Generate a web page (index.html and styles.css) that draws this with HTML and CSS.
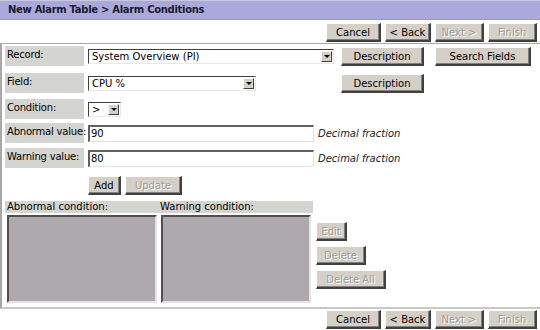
FILE: index.html
```html
<!DOCTYPE html>
<html>
<head>
<meta charset="utf-8">
<link rel="stylesheet" href="styles.css">
</head>
<body>
<div class="title">New Alarm Table &gt; Alarm Conditions</div>
<div class="nav">
  <span class="btn w55">Cancel</span>
  <span class="btn w46">&lt; Back</span>
  <span class="btn w49 dis">Next &gt;</span>
  <span class="btn w49 dis">Finish</span>
</div>
<div class="panel">
  <div class="row r1">
    <div class="lbl">Record:</div>
    <div class="sel w246"><span class="val">System Overview (PI)</span><span class="arr"></span></div>
    <span class="btn desc">Description</span>
    <span class="btn search">Search Fields</span>
  </div>
  <div class="row r2">
    <div class="lbl">Field:</div>
    <div class="sel w168"><span class="val">CPU %</span><span class="arr"></span></div>
    <span class="btn desc desc2">Description</span>
  </div>
  <div class="row r3">
    <div class="lbl">Condition:</div>
    <div class="sel w33"><span class="val">&gt;</span><span class="arr"></span></div>
  </div>
  <div class="row r4">
    <div class="lbl">Abnormal value:</div>
    <div class="inp">90</div>
    <span class="hint">Decimal fraction</span>
  </div>
  <div class="row r5">
    <div class="lbl">Warning value:</div>
    <div class="inp">80</div>
    <span class="hint">Decimal fraction</span>
  </div>
  <div class="row r6">
    <span class="btn add">Add</span>
    <span class="btn dis upd">Update</span>
  </div>
  <div class="lists">
    <div class="listcol">
      <div class="lhead">
        <span class="lh1">Abnormal condition:</span>
        <span class="lh2">Warning condition:</span>
      </div>
      <div class="boxes">
        <div class="box"></div>
        <div class="box"></div>
      </div>
    </div>
    <div class="side">
      <span class="btn dis edit">Edit</span>
      <span class="btn dis del">Delete</span>
      <span class="btn dis delall">Delete All</span>
    </div>
  </div>
</div>
<div class="nav bottom">
  <span class="btn w55">Cancel</span>
  <span class="btn w46">&lt; Back</span>
  <span class="btn w49 dis">Next &gt;</span>
  <span class="btn w49 dis">Finish</span>
</div>
</body>
</html>
```
FILE: styles.css
```css
html, body {
  margin: 0;
  padding: 0;
  background: #ffffff;
  overflow: hidden;
}
body {
  width: 540px;
  height: 330px;
  font-family: "DejaVu Sans", Verdana, sans-serif;
  font-size: 10px;
  color: #000;
}
.title {
  background: #aba8dc;
  border-top: 1px solid #c8c8d8;
  border-bottom: 1px solid #9c9cb0;
  font-weight: bold;
  font-size: 10px;
  letter-spacing: -0.3px;
  line-height: 17px;
  padding-left: 8px;
  color: #1a1a2a;
  box-sizing: border-box;
  height: 20px;
}
.nav {
  display: flex;
  justify-content: flex-end;
  gap: 4px;
  padding: 3px 3px 0 0;
  height: 23px;
  box-sizing: border-box;
}
.nav.bottom {
  padding-top: 1px;
  height: auto;
}
.btn {
  display: inline-flex;
  align-items: center;
  justify-content: center;
  box-sizing: border-box;
  height: 19px;
  background: #d4d0c8;
  border-top: 1px solid #ffffff;
  border-left: 1px solid #ffffff;
  border-right: 2px solid #404040;
  border-bottom: 2px solid #404040;
  box-shadow: inset -1px -1px 0 #808080;
  font-size: 10px;
  color: #000;
  padding-top: 1px;
  white-space: nowrap;
}
.btn.dis {
  color: #a09c94;
  text-shadow: 1px 1px 0 #ffffff;
}
.w55 { width: 55px; }
.w46 { width: 46px; }
.w49 { width: 49px; }

.panel {
  border-top: 1px solid #a8a8a8;
  border-left: 2px solid #a8a8a8;
  border-bottom: 2px solid #c8c8c8;
  height: 266px;
  box-sizing: border-box;
  padding: 2px 0 0 3px;
  width: 545px;
}
.row {
  display: flex;
  align-items: center;
  gap: 4px;
}
.lbl {
  width: 79px;
  height: 20px;
  background: #d4d4d0;
  padding: 2px 0 0 2px;
  box-sizing: border-box;
  align-self: flex-start;
  white-space: nowrap;
  line-height: 13px;
  letter-spacing: -0.2px;
}
.r1 { height: 21px; }
.r2 { margin-top: 6px; height: 21px; }
.r3 { margin-top: 5px; height: 21px; }
.r4 { margin-top: 3px; height: 20px; }
.r5 { margin-top: 5px; height: 21px; }
.r6 { margin-top: 7px; padding-left: 83px; height: 19px; }

.sel {
  display: flex;
  align-items: center;
  justify-content: space-between;
  box-sizing: border-box;
  height: 15px;
  background: #fff;
  border-top: 1px solid #404040;
  border-left: 1px solid #404040;
  border-right: 1px solid #e8e8e8;
  border-bottom: 1px solid #e8e8e8;
  padding-left: 3px;
}
.val { line-height: 13px; }
.arr {
  width: 11px;
  height: 11px;
  margin-right: 1px;
  box-sizing: border-box;
  background: #d4d0c8;
  border-top: 1px solid #fff;
  border-left: 1px solid #fff;
  border-right: 1px solid #404040;
  border-bottom: 1px solid #404040;
  position: relative;
}
.arr::after {
  content: "";
  position: absolute;
  left: 2px;
  top: 3px;
  border-left: 3px solid transparent;
  border-right: 3px solid transparent;
  border-top: 3px solid #000;
}
.w246 { width: 246px; }
.w168 { width: 168px; }
.w33 { width: 33px; }

.desc { width: 83px; margin-left: 3px; }
.desc2 { margin-left: 81px; }
.search { width: 96px; margin-left: 7px; }

.inp {
  width: 226px;
  height: 17px;
  box-sizing: border-box;
  background: #fff;
  border-top: 2px solid #606060;
  border-left: 2px solid #606060;
  border-right: 1px solid #e0e0e0;
  border-bottom: 1px solid #e0e0e0;
  padding-left: 1px;
  line-height: 14px;
}
.hint {
  font-style: italic;
  color: #222;
}
.add { width: 33px; }
.upd { width: 57px; }

.lists {
  display: flex;
  margin-top: 6px;
}
.listcol { width: 308px; }
.lhead {
  display: flex;
  height: 12px;
  background: #d4d4d0;
  line-height: 12px;
  padding-left: 2px;
}
.lh1 { width: 153px; }
.boxes {
  display: flex;
  gap: 4px;
  padding: 2px 0 0 2px;
}
.box {
  width: 150px;
  height: 88px;
  box-sizing: border-box;
  background: #ada9ad;
  border-top: 2px solid #505050;
  border-left: 2px solid #505050;
  border-right: 2px solid #e4e4e4;
  border-bottom: 2px solid #e4e4e4;
}
.side {
  display: flex;
  flex-direction: column;
  align-items: flex-start;
  gap: 5px;
  padding: 21px 0 0 3px;
}
.edit { width: 31px; }
.del { width: 50px; }
.delall { width: 70px; }
```
